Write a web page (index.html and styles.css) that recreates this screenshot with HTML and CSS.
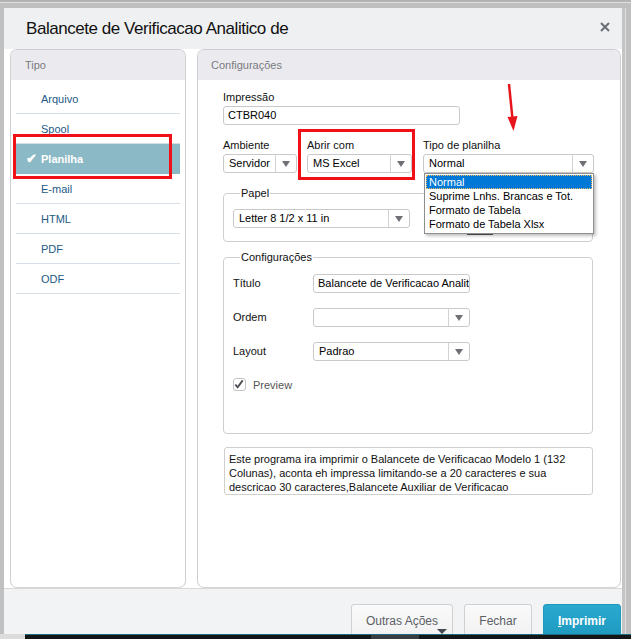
FILE: index.html
```html
<!DOCTYPE html>
<html lang="pt-BR">
<head>
  <meta charset="UTF-8">
  <title>Balancete de Verificacao Analitico de</title>
  <link rel="stylesheet" href="styles.css">
</head>
<body>

  <div class="topbar"></div>

  <div class="screen">
    <div class="dialog">

      <div class="dlg-head">
        <h1>Balancete de Verificacao Analitico de</h1>
        <svg class="close" width="10" height="10" viewBox="0 0 10 10">
          <path d="M1 1 L9 9 M9 1 L1 9" stroke="#6b6f75" stroke-width="2"/>
        </svg>
      </div>

      <div class="dlg-body">

        <div class="panel side">
          <div class="panel-title">Tipo</div>
          <ul class="tipos">
            <li>Arquivo</li>
            <li>Spool</li>
            <li class="sel"><span class="tick">✔</span>Planilha</li>
            <li>E-mail</li>
            <li>HTML</li>
            <li>PDF</li>
            <li>ODF</li>
          </ul>
        </div>

        <div class="panel main">
          <div class="panel-title">Configurações</div>
          <div class="form">

            <label class="lbl">Impressão</label>
            <div class="input w-imp">CTBR040</div>

            <div class="row3">
              <div class="col">
                <label class="lbl">Ambiente</label>
                <div class="select w-amb"><span>Servidor</span><i class="arr"></i></div>
              </div>
              <div class="col">
                <label class="lbl">Abrir com</label>
                <div class="select w-abr"><span>MS Excel</span><i class="arr"></i></div>
              </div>
              <div class="col drop-host">
                <label class="lbl">Tipo de planilha</label>
                <div class="select w-tipo"><span>Normal</span><i class="arr"></i></div>
                <ul class="droplist">
                  <li class="hi">Normal</li>
                  <li>Suprime Lnhs. Brancas e Tot.</li>
                  <li>Formato de Tabela</li>
                  <li>Formato de Tabela Xlsx</li>
                </ul>
              </div>
            </div>

            <fieldset class="box papel">
              <legend>Papel</legend>
              <div class="select w-papel"><span>Letter 8 1/2 x 11 in</span><i class="arr"></i></div>
              <div class="hidden-btn"></div>
            </fieldset>

            <fieldset class="box config">
              <legend>Configurações</legend>
              <div class="grid">
                <span class="glbl">Título</span>
                <div class="input">Balancete de Verificacao Analit</div>
                <span class="glbl">Ordem</span>
                <div class="select"><span></span><i class="arr"></i></div>
                <span class="glbl">Layout</span>
                <div class="select"><span>Padrao</span><i class="arr"></i></div>
              </div>
              <div class="check">
                <span class="cbox">
                  <svg width="13" height="13" viewBox="0 0 13 13"><path d="M2.5 6.5 L5 9.5 L10.5 2" fill="none" stroke="#4a4d52" stroke-width="2"/></svg>
                </span>
                Preview
              </div>
            </fieldset>

            <div class="memo">Este programa ira imprimir o Balancete de Verificacao Modelo 1 (132<br>Colunas), aconta eh impressa limitando-se a 20 caracteres e sua<br>descricao 30 caracteres,Balancete Auxiliar de Verificacao</div>

          </div>
        </div>

      </div>

      <div class="dlg-foot">
        <button class="btn outras">Outras Ações<i class="mini"></i></button>
        <button class="btn">Fechar</button>
        <button class="btn primary"><u>I</u>mprimir</button>
      </div>

      <!-- marcações em vermelho -->
      <div class="mark mark-planilha"></div>
      <div class="mark mark-abrir"></div>
      <svg class="mark-arrow" width="14" height="50" viewBox="0 0 14 50">
        <path d="M3 1 L6.5 36" stroke="#e8141c" stroke-width="2.5"/>
        <path d="M1.5 34 L7.5 48 L11.5 33 Z" fill="#e8141c"/>
      </svg>
    </div>
    <div class="rightbar"></div>
  </div>

  <div class="taskbar"><span class="tb-start"></span><span class="tb-item"></span></div>

</body>
</html>
```

FILE: styles.css
```css
* {
  box-sizing: border-box;
}

html, body {
  margin: 0;
  height: 639px;
  overflow: hidden;
}

body {
  font-family: "Liberation Sans", Arial, sans-serif;
  font-size: 11px;
  color: #222;
  background: #c0c0c0;
}

.topbar {
  height: 8px;
  background: linear-gradient(#b3b3b3 0, #b3b3b3 2px, #e2e2e2 2px, #e2e2e2 3px, #bfbfbf 3px);
}

.screen {
  display: flex;
  height: 626px;
  padding-left: 4px;
}

.rightbar {
  flex: 1;
  background: linear-gradient(90deg, #c4c4c4 0, #c4c4c4 3px, #dedede 3px, #dedede 4px, #c0c0c0 4px);
}

.dialog {
  position: relative;
  width: 618px;
  height: 626px;
  background: #fff;
  display: flex;
  flex-direction: column;
  overflow: hidden;
}

/* cabeçalho */
.dlg-head {
  height: 41px;
  background: #eff0f2;
  display: flex;
  align-items: center;
  justify-content: space-between;
  padding: 1px 12px 0 22px;
}

.dlg-head h1 {
  margin: 0;
  font-size: 17px;
  font-weight: normal;
  color: #111;
  letter-spacing: -0.45px;
}

.close {
  margin-top: -4px;
}

/* corpo */
.dlg-body {
  flex: 1;
  display: flex;
  gap: 11px;
  padding: 0 1px 0 6px;
}

.panel {
  border: 1px solid #cfcfd2;
  border-bottom-color: #d6d6d6;
  border-radius: 7px;
  background: #fff;
  overflow: hidden;
}

.side {
  width: 176px;
}

.main {
  flex: 1;
  position: relative;
}

.panel-title {
  height: 30px;
  line-height: 30px;
  background: #ebebef;
  color: #7a7a80;
  padding-left: 14px;
  font-size: 11px;
}

.main .panel-title {
  padding-left: 13px;
}

.tipos {
  list-style: none;
  margin: 4px 5px 0 5px;
  padding: 0;
}

.tipos li {
  height: 30px;
  line-height: 30px;
  border-bottom: 1px solid #d8dee6;
  padding-left: 25px;
  color: #235a86;
  font-size: 11px;
}

.tipos li.sel {
  background: #8bb9c5;
  color: #fff;
  font-weight: bold;
  padding-left: 10px;
  border-bottom-color: #8bb9c5;
}

.tick {
  display: inline-block;
  width: 15px;
  font-size: 13px;
}

/* formulário */
.form {
  padding: 10px 28px 0 25px;
}

.lbl {
  display: block;
  height: 14px;
  line-height: 14px;
  margin-bottom: 2px;
  color: #111;
}

.input,
.select {
  height: 19px;
  border: 1px solid #c9c9c9;
  border-radius: 3px;
  background: #fff;
  line-height: 17px;
  padding-left: 4px;
  color: #000;
  font-size: 11px;
  white-space: nowrap;
  overflow: hidden;
}

.select {
  display: flex;
  padding-left: 0;
}

.select span {
  flex: 1;
  padding-left: 5px;
  overflow: hidden;
}

.arr {
  width: 21px;
  border-left: 1px solid #d3d3d3;
  position: relative;
}

.arr::after {
  content: "";
  position: absolute;
  left: 6px;
  top: 6px;
  border-left: 4px solid transparent;
  border-right: 4px solid transparent;
  border-top: 6px solid #6e7076;
}

.w-imp { width: 237px; }
.w-amb { width: 74px; }
.w-abr { width: 105px; }
.w-tipo { width: 171px; }
.w-papel { width: 177px; }

.row3 {
  display: flex;
  gap: 10px;
  margin-top: 13px;
}

.drop-host {
  position: relative;
  margin-left: 1px;
}

.droplist {
  position: absolute;
  z-index: 2;
  left: 1px;
  top: 35px;
  width: 170px;
  margin: 0;
  padding: 1px 1px 2px;
  list-style: none;
  background: #fff;
  border: 1px solid #8e8e8e;
  box-shadow: 2px 2px 3px rgba(0, 0, 0, 0.25);
  font-size: 11px;
}

.droplist li {
  height: 14px;
  line-height: 14px;
  padding-left: 3px;
  color: #000;
}

.droplist li.hi {
  background: #0078d7;
  color: #fff;
  outline: 1px dotted #f0c060;
  outline-offset: -1px;
}

.box {
  margin: 13px 0 0 0;
  border: 1px solid #cfcfcf;
  border-radius: 4px;
  padding: 9px 10px 13px 9px;
}

.box legend {
  padding: 0 1px;
  margin-left: 7px;
  line-height: 14px;
  color: #111;
}

.papel {
  position: relative;
  width: 370px;
}

.hidden-btn {
  position: absolute;
  left: 243px;
  top: 33px;
  width: 26px;
  height: 2px;
  background: #555;
}

.config {
  width: 370px;
  height: 184px;
  margin-top: 8px;
  padding-top: 10px;
}

.grid {
  display: grid;
  grid-template-columns: 80px 157px;
  row-gap: 15px;
}

.glbl {
  line-height: 19px;
  color: #111;
}

.check {
  display: flex;
  align-items: center;
  gap: 7px;
  margin-top: 17px;
  color: #555;
}

.cbox {
  width: 13px;
  height: 13px;
  border: 1px solid #c3c3c3;
  border-radius: 3px;
  display: flex;
}

.cbox svg {
  margin: -1px 0 0 -1px;
}

.memo {
  margin-top: 13px;
  width: 369px;
  height: 48px;
  border: 1px solid #cfcfcf;
  border-radius: 3px;
  padding: 4px 4px;
  line-height: 14px;
  font-size: 11px;
  color: #111;
  margin-left: 1px;
  white-space: nowrap;
}

/* rodapé */
.dlg-foot {
  height: 46px;
  background: #f2f3f4;
  border-top: 1px solid #d8d8d8;
  display: flex;
  justify-content: flex-end;
  gap: 11px;
  padding: 15px 1px 0 0;
}

.btn {
  height: 40px;
  padding: 0 8px 6px;
  border: 1px solid #d0d0d0;
  border-radius: 3px;
  background: linear-gradient(#fafafa, #f0f0f0);
  font-family: "Liberation Sans", Arial, sans-serif;
  font-size: 12px;
  color: #5b5f66;
  position: relative;
  white-space: nowrap;
}

.outras { width: 102px; }

.mini {
  position: absolute;
  right: 5px;
  bottom: 9px;
  border-left: 5px solid transparent;
  border-right: 5px solid transparent;
  border-top: 5px solid #454850;
}

.btn + .btn { width: 68px; }

.btn.primary {
  width: 78px;
  background: linear-gradient(#2aa9cf, #1c97be);
  border-color: #2098be;
  color: #fff;
  font-weight: bold;
}

.btn.primary u {
  text-decoration-thickness: 1px;
}

/* marcações */
.mark {
  position: absolute;
  border: 3px solid #f01018;
}

.mark-planilha {
  left: 9px;
  top: 126px;
  width: 159px;
  height: 45px;
}

.mark-abrir {
  left: 294px;
  top: 121px;
  width: 117px;
  height: 51px;
}

.mark-arrow {
  position: absolute;
  left: 502px;
  top: 75px;
}

.taskbar {
  height: 5px;
  background: #141516;
  border-top: 1px solid #1c6d84;
  display: flex;
}

.tb-start {
  width: 25px;
  margin-top: -1px;
  background: #dcdcdc;
}

.tb-item {
  width: 48px;
  margin-left: 346px;
  background: #3a3d40;
}
```
